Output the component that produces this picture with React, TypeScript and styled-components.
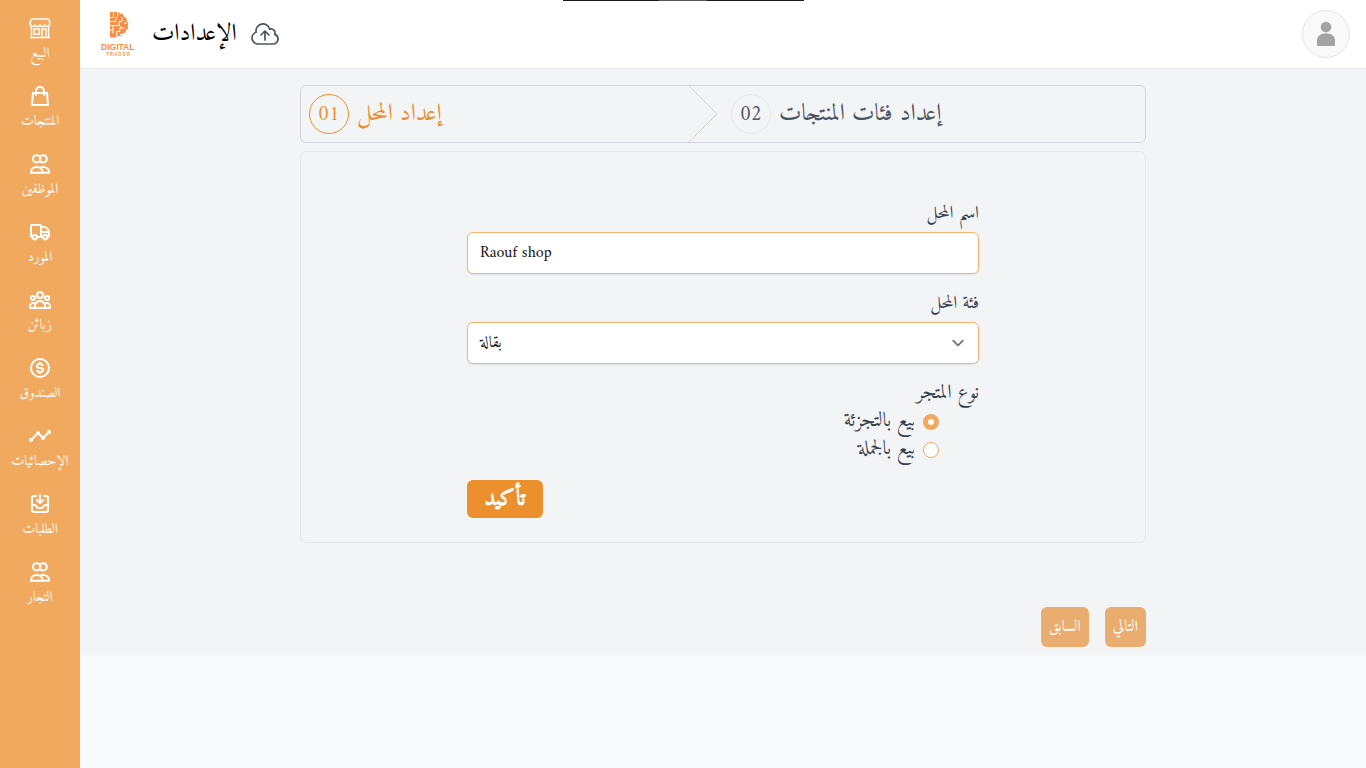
import React from "react";
import styled, { createGlobalStyle } from "styled-components";
import { BiDollarCircle } from "react-icons/bi";
import { MdTimeline } from "react-icons/md";
import { HiOutlineInboxIn, HiOutlineShoppingBag, HiOutlineUserGroup } from "react-icons/hi";
import { HiOutlineCloudArrowUp } from "react-icons/hi2";

const GlobalStyle = createGlobalStyle`
  *, *::before, *::after { box-sizing: border-box; }
  body {
    margin: 0;
    background: #f9fafb;
    font-family: Amiri, "Liberation Serif", "DejaVu Sans", serif;
    color: #374151;
    overflow: hidden;
  }
`;

const Text = styled.span<{ $size: number; $line: number; $top?: number }>`
  display: block;
  flex: none;
  font-size: ${(p) => p.$size}px;
  line-height: ${(p) => p.$line}px;
  margin-top: ${(p) => p.$top ?? 0}px;
  white-space: nowrap;
`;

const Page = styled.div`
  display: flex;
  height: 768px;
`;

const Sidebar = styled.nav`
  flex: none;
  width: 80px;
  padding-top: 16px;
  background: #f0a95e;
  color: #fff;
`;

const NavItem = styled.a`
  display: flex;
  flex-direction: column;
  align-items: center;
  height: 68px;
  svg { flex: none; }
`;

const Main = styled.div`
  flex: 1;
  display: flex;
  flex-direction: column;
`;

const Header = styled.header`
  display: flex;
  align-items: center;
  height: 69px;
  padding: 0 16px 0 20px;
  background: #fff;
  border-bottom: 1px solid #e5e7eb;
  color: #000;
`;

const LoadingBar = styled.div`
  position: absolute;
  top: 0;
  left: 563px;
  width: 241px;
  height: 1px;
  background: linear-gradient(90deg, #1c1a1b 96px, #5c5757 96px 144px, #1c1a1b 144px);
`;

const LogoWrap = styled.div`
  display: flex;
  width: 36px;
  margin-right: 16px;
`;

const CloudIcon = styled(HiOutlineCloudArrowUp)`
  margin-left: 12px;
  color: #4b5563;
  stroke-width: 1.3;
`;

const Avatar = styled.div`
  display: flex;
  justify-content: center;
  align-items: center;
  width: 48px;
  height: 48px;
  margin-left: auto;
  border: 1px solid #e5e5e5;
  border-radius: 50%;
  background: #f9f9f9;
`;

const Content = styled.main`
  display: flex;
  flex-direction: column;
  height: 586px;
  padding: 16px 220px 0;
  background: #f3f4f6;
`;

const Steps = styled.ol`
  display: flex;
  flex: none;
  height: 58px;
  margin: 0 0 8px;
  padding: 0;
  list-style: none;
  border: 1px solid #d1d5db;
  border-radius: 6px;
`;

const Step = styled.li<{ $active?: boolean }>`
  display: flex;
  align-items: center;
  gap: 8px;
  padding-left: ${(p) => (p.$active ? 8 : 13)}px;
  width: ${(p) => (p.$active ? "387px" : "auto")};
  color: ${(p) => (p.$active ? "#ec8f2d" : "#4b5563")};
`;

const StepNumber = styled.span<{ $active?: boolean }>`
  display: flex;
  align-items: center;
  justify-content: center;
  width: 40px;
  height: 40px;
  border: 1px solid ${(p) => (p.$active ? "#ec8f2d" : "#e5e7eb")};
  border-radius: 50%;
`;

const Panel = styled.section`
  flex: none;
  display: flex;
  flex-direction: column;
  height: 392px;
  padding: 48px 166px 0;
  border: 1px solid #e5e7eb;
  border-radius: 6px;
`;

const Field = styled.div`
  display: flex;
  flex-direction: column;
  align-items: flex-end;
  height: 90px;
`;

const LabelRow = styled.label`
  display: flex;
  height: 32px;
`;

const Control = styled.div`
  display: flex;
  align-items: center;
  justify-content: space-between;
  width: 512px;
  height: 42px;
  padding: 0 8px 0 12px;
  border: 1px solid #f3b56f;
  border-radius: 6px;
  background: #fff;
  box-shadow: 0 1px 2px rgba(0, 0, 0, 0.08);
  color: #111;
`;

const RadioGroup = styled.div`
  display: flex;
  flex-direction: column;
  align-items: flex-end;
  height: 100px;
`;

const RadioRow = styled.label`
  display: flex;
  align-items: center;
  gap: 8px;
  height: 28px;
  margin-right: 40px;
`;

const Radio = styled.span<{ $checked?: boolean }>`
  width: 16px;
  height: 16px;
  border: ${(p) => (p.$checked ? 5 : 1)}px solid #f0a95e;
  border-radius: 50%;
  background: #fff;
`;

const Submit = styled.button`
  display: flex;
  justify-content: center;
  width: 76px;
  height: 38px;
  padding: 0;
  border: 0;
  border-radius: 6px;
  background: #ec8f2d;
  color: #fff;
  font-family: inherit;
  font-weight: 700;
  -webkit-text-stroke: 0.5px #fff;
`;

const Pager = styled.div`
  display: flex;
  justify-content: flex-end;
  gap: 16px;
  margin-top: 64px;
`;

const PagerButton = styled.button`
  display: flex;
  justify-content: center;
  height: 40px;
  padding: 0 8px;
  border: 0;
  border-radius: 6px;
  background: #e9ad6f;
  color: #fff;
  font-family: inherit;
`;

const Logo = () => (
  <svg width="36" height="48" viewBox="0 0 36 48" fill="none">
    <path
      d="M10 2h8.500l2 1.500 2.500.8 1.200 2.500 2.300 1.500.3 2.700 1.700 2-.8 2.500.7 2.500-2.200 2-.6 2.500-2.800 1-1.600 2.300-2.700.2-1.500 1.500H10z"
      fill="#fb8e47"
    />
    <path
      d="M13.500 1v6.500H9.500M17.800 1v5l-2 2v3.500h-6M9 15.500h10v-4h3V7M13 15v5H9M13 20v3.500M16.800 29v-7.500h3V18h4.500M20 24.500h3M24 13h3M19.500 15.500l1.500 2"
      stroke="#fff"
      strokeWidth="1"
    />
    <text x="1" y="40.300" fontFamily="Liberation Sans" fontWeight="700" fontSize="8.300" textLength="33.500" lengthAdjust="spacingAndGlyphs" fill="#fb8e47">DIGITAL</text>
    <text x="6" y="45.800" fontFamily="Liberation Sans" fontWeight="700" fontSize="4.600" textLength="24" fill="#fb9a5a">TRADER</text>
  </svg>
);

const ShopIcon = () => (
  <svg width="24" height="24" viewBox="0 0 24 24" fill="none" stroke="currentColor" strokeWidth="1.500">
    <path d="M5.500 2.900h13c1.800 0 3.200 1.400 3.200 3.200v2.400c0 1.200-1 1.900-2.200 1.900-1.300 0-2.500-.8-2.500-2 0 1.200-1.100 2-2.500 2s-2.500-.8-2.500-2c0 1.200-1.100 2-2.500 2s-2.500-.8-2.500-2c0 1.200-1.200 2-2.500 2-1.200 0-2.200-.7-2.200-1.900V6.100c0-1.800 1.400-3.200 3.200-3.200z" />
    <path d="M3.500 10.200v11M20.500 10.200v11M2 21.400h20M6.200 13h5.200v5.200H6.200zM14 21.200V13h3.800v8.200" />
  </svg>
);

const PairIcon = () => (
  <svg width="24" height="24" viewBox="0 0 24 24" fill="none" stroke="currentColor" strokeWidth="2">
    <circle cx="8.600" cy="6.900" r="3.700" />
    <path d="M12 4.900a3.700 3.700 0 1 1 0 4" />
    <path d="M3 20.800v-.8c0-3 2.500-5 5.700-5s5.700 2 5.700 5v.8zM12.200 15.800c.8-.5 1.700-.8 2.900-.8 3.200 0 5.900 2 5.900 5v.8h-6.600" />
  </svg>
);

const TruckIcon = () => (
  <svg width="24" height="24" viewBox="0 0 24 24" fill="none" stroke="currentColor" strokeWidth="2">
    <path d="M4.500 17H4a1 1 0 0 1-1-1V6a1 1 0 0 1 1-1h8a1 1 0 0 1 1 1v11H9M13 7h2.500c3 0 5.500 2.500 5.500 5.500V16a1 1 0 0 1-1 1h-.5M13 12h8M13 17h1.800" />
    <circle cx="6.800" cy="17.200" r="2.100" />
    <circle cx="17.200" cy="17.200" r="2.100" />
  </svg>
);

const Person = () => (
  <svg width="24" height="28" viewBox="0 0 24 28" fill="#a3a3a3">
    <circle cx="12" cy="7" r="5.300" />
    <path d="M3 23v-2.500C3 16 7 13.200 12 13.200s9 2.800 9 7.300V25q0 1-1 1H4q-1 0-1-1z" />
  </svg>
);

const Chevron = () => (
  <svg width="24" height="24" viewBox="0 0 20 20" fill="none">
    <path d="m6 8 4 4 4-4" stroke="#6b7280" strokeWidth="1.500" strokeLinecap="round" strokeLinejoin="round" />
  </svg>
);

const navItems = [
  { label: "البيع", icon: <ShopIcon /> },
  { label: "المنتجات", icon: <HiOutlineShoppingBag size={24} /> },
  { label: "الموظفين", icon: <PairIcon /> },
  { label: "المورد", icon: <TruckIcon /> },
  { label: "زبائن", icon: <HiOutlineUserGroup size={24} /> },
  { label: "الصندوق", icon: <BiDollarCircle size={24} /> },
  { label: "الإحصائيات", icon: <MdTimeline size={24} /> },
  { label: "الطلبات", icon: <HiOutlineInboxIn size={24} /> },
  { label: "التجار", icon: <PairIcon /> },
];

export default function App() {
  return (
    <>
      <GlobalStyle />
      <LoadingBar />
      <Page>
        <Sidebar>
          {navItems.map((item) => (
            <NavItem key={item.label}>
              {item.icon}
              <Text $size={14} $line={20} $top={4}>{item.label}</Text>
            </NavItem>
          ))}
        </Sidebar>
        <Main>
          <Header>
            <LogoWrap><Logo /></LogoWrap>
            <Text $size={24} $line={32}>الإعدادات</Text>
            <CloudIcon size={32} />
            <Avatar><Person /></Avatar>
          </Header>
          <Content>
            <Steps>
              <Step $active>
                <StepNumber $active><Text $size={20} $line={28} $top={4}>01</Text></StepNumber>
                <Text $size={24} $line={32}>إعداد المحل</Text>
              </Step>
              <svg width="30" height="56" viewBox="0 0 30 56" fill="none">
                <path d="M1 0l28 28L1 56" stroke="#d1d5db" />
              </svg>
              <Step>
                <StepNumber><Text $size={20} $line={28} $top={4}>02</Text></StepNumber>
                <Text $size={24} $line={32}>إعداد فئات المنتجات</Text>
              </Step>
            </Steps>
            <Panel>
              <Field>
                <LabelRow><Text $size={18} $line={28}>اسم المحل</Text></LabelRow>
                <Control><Text $size={16} $line={24}>Raouf shop</Text></Control>
              </Field>
              <Field>
                <LabelRow><Text $size={18} $line={28}>فئة المحل</Text></LabelRow>
                <Control>
                  <Text $size={16} $line={24}>بقالة</Text>
                  <Chevron />
                </Control>
              </Field>
              <RadioGroup>
                <Text $size={20} $line={28}>نوع المتجر</Text>
                <RadioRow>
                  <Text $size={20} $line={28}>بيع بالتجزئة</Text>
                  <Radio $checked />
                </RadioRow>
                <RadioRow>
                  <Text $size={20} $line={28}>بيع بالجملة</Text>
                  <Radio />
                </RadioRow>
              </RadioGroup>
              <Submit><Text $size={22} $line={28} $top={6}>تأكيد</Text></Submit>
            </Panel>
            <Pager>
              <PagerButton><Text $size={16} $line={24} $top={8}>السابق</Text></PagerButton>
              <PagerButton><Text $size={16} $line={24} $top={8}>التالي</Text></PagerButton>
            </Pager>
          </Content>
        </Main>
      </Page>
    </>
  );
}
